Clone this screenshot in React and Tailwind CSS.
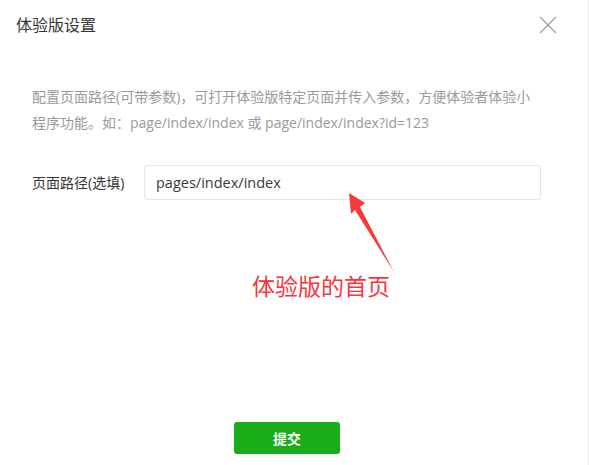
import React from "react";

const font = {
  fontFamily: '"Open Sans", "Noto Sans CJK SC", sans-serif',
};

const App = () => {
  return (
    <div className="flex w-[589px] h-[465px] bg-white" style={font}>
      {/* Dialog */}
      <div className="relative w-[588px] h-full flex flex-col">
        {/* Header */}
        <div className="flex items-start justify-between pl-4 pr-[31px] pt-[14px]">
          <h1 className="text-[16px] leading-[22px] text-[#353535]">体验版设置</h1>
          <button className="mt-[2px] text-[#a0a0a0]">
            <svg width="18" height="18" viewBox="0 0 18 18" fill="none" stroke="currentColor" strokeWidth="1.3">
              <path d="M1 1L17 17M17 1L1 17" />
            </svg>
          </button>
        </div>

        {/* Description */}
        <p className="ml-8 mt-[48px] w-[505px] text-[14px] leading-[26px] text-[#9a9a9a]">
          配置页面路径(可带参数)，可打开体验版特定页面并传入参数，方便体验者体验小程序功能。如：page/index/index 或 page/index/index?id=123
        </p>

        {/* Form row */}
        <div className="flex items-center mt-[29px] ml-8">
          <label className="w-[112px] text-[14px] text-[#353535]">页面路径(选填)</label>
          <div className="w-[397px] h-[35px] flex items-center pl-[11px] pr-3 border border-[#e5e5e5] rounded-[3px] text-[14.5px] text-[#3a3a3a]">
            pages/index/index
          </div>
        </div>

        {/* Footer */}
        <div className="mt-auto mb-[11px] ml-[234px]">
          <button className="w-[106px] h-[32px] rounded-[3px] bg-[#1aad19] text-white text-[14px] font-semibold">
            提交
          </button>
        </div>

        {/* Annotation */}
        <svg className="absolute left-[340px] top-[188px]" width="60" height="90" viewBox="0 0 60 90">
          <path d="M9 5L25 15L20 19L54 84L15 22L11 26Z" fill="#f53c3c" />
        </svg>
        <div className="absolute left-[252px] top-[275px] text-[23px] leading-none text-[#f5363c]">
          体验版的首页
        </div>
      </div>
      <div className="w-px h-full bg-[#ebebeb]" />
    </div>
  );
};

export default App;
